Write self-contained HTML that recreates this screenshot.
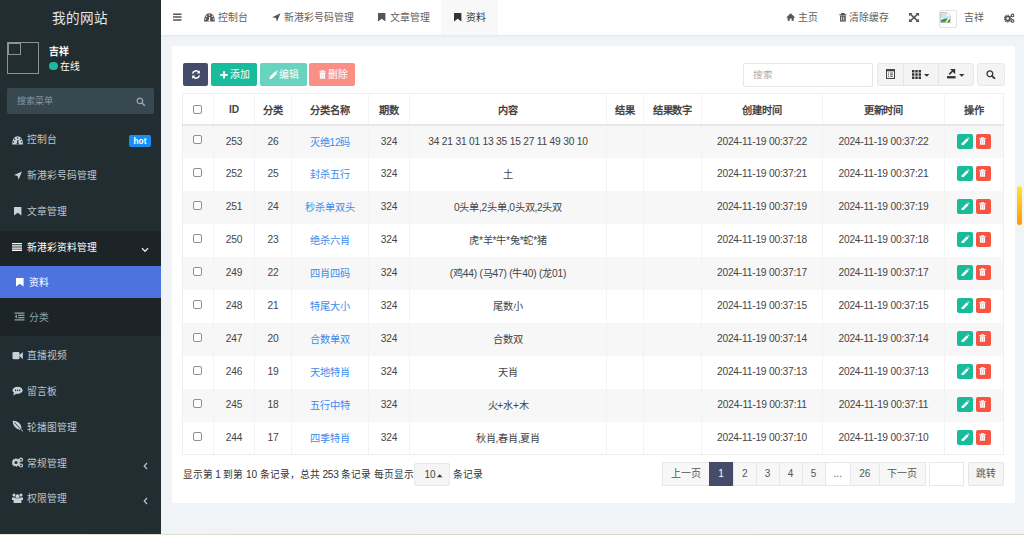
<!DOCTYPE html>
<html lang="zh-CN"><head><meta charset="utf-8">
<style>
*{box-sizing:border-box;margin:0;padding:0}
html,body{width:1024px;height:535px;overflow:hidden;background:#f1f4f6;font-family:"Liberation Sans",sans-serif;font-size:9.8px;color:#333}
.abs{position:absolute}
.n{font-size:10.2px;letter-spacing:-0.2px}
#sb{position:absolute;left:0;top:0;width:161px;height:534px;background:#222d32}
#sb .logo{position:absolute;left:0;top:0.5px;width:159px;height:35px;line-height:35px;text-align:center;color:#e4e7e9;font-size:13.6px}
.avatar{position:absolute;left:7px;top:42px;width:32px;height:32px;border:1px solid #8b9194}
.avatar i{position:absolute;left:0;top:0;width:12.5px;height:12px;border:1px solid #8b9194}
.uname{position:absolute;left:49px;top:43.5px;color:#fff;font-weight:bold;font-size:9.8px}
.ustat{position:absolute;left:49px;top:59px;color:#fff;font-size:9.8px}
.ustat b{display:inline-block;width:8.5px;height:8.5px;border-radius:50%;background:#18bc9c;vertical-align:0;margin-right:2.2px}
.sbsearch{position:absolute;left:7px;top:88px;width:147px;height:26px;background:#374850;border-radius:2px;color:#8a9ba3;padding-left:10px;line-height:26px;font-size:9px}
.mi{position:absolute;left:0;width:161px;height:35px;line-height:35px;color:#b8c7ce;padding-left:27px}
.mi .ic{position:absolute;left:12px;top:0;width:12px;height:35px}
.mi svg{position:absolute}
#hd{position:absolute;left:161px;top:0;width:863px;height:35px;background:#fff;box-shadow:0 1px 2px rgba(0,0,0,.06)}
.tab{position:absolute;top:0;height:35px;line-height:35px;color:#5f5f5f;font-size:9.9px}
#panel{position:absolute;left:172px;top:46px;width:843px;height:457px;background:#fff;border-radius:2px}
.btn{position:absolute;top:63px;height:23px;border-radius:2px;color:#fff;line-height:23px;text-align:center;font-size:9.8px}
table{position:absolute;left:182px;top:93px;width:821px;border-collapse:collapse;table-layout:fixed}
td,th{border:1px solid #f0f0f0;text-align:center;font-size:10.2px;letter-spacing:-0.2px;color:#444;white-space:nowrap;overflow:hidden;padding-bottom:1px}
th{height:31px;font-weight:bold;border-bottom:2px solid #e8e8e8;padding-bottom:0;padding-top:1px}
td{height:33px;border-top:0;border-bottom:0;border-left:1px solid #f3f3f3;border-right:1px solid #f3f3f3}
tr:last-child td{border-bottom:1px solid #eeeeee}
td:first-child,th:first-child{border-left:1px solid #efefef}
td:last-child,th:last-child{border-right:1px solid #efefef}
th{border-top:1px solid #efefef;border-left:1px solid #f3f3f3;border-right:1px solid #f3f3f3}
tr.odd td{background:#f7f7f7}
.cb{display:inline-block;width:9px;height:9px;border:1px solid #8f8f8f;border-radius:2px;background:#fff;vertical-align:middle;position:relative;top:-1px;left:-1px}
td .cb{top:-2px}
a{color:#3b8ced;text-decoration:none}
.op{display:inline-block;width:16px;height:15px;border-radius:2px;vertical-align:middle;position:relative;top:0;letter-spacing:0}
.op svg{position:absolute;left:3.8px;top:3.2px}
.op.g{background:#18bc9c;margin-right:2.5px}.op.r{background:#f75444;width:15.5px}
.pg{position:absolute;top:462px;height:24px;line-height:22px;text-align:center;border:1px solid #e8e8e8;background:#f7f7f7;color:#555;font-size:10px}
</style></head><body>
<div id="sb">
  <div class="logo">我的网站</div>
  <div class="avatar"><i></i></div>
  <div class="uname">吉祥</div>
  <div class="ustat"><b></b>在线</div>
  <div class="sbsearch">搜索菜单
    <svg class="abs" style="left:128.5px;top:8.5px" width="10" height="10" viewBox="0 0 10 10"><circle cx="3.9" cy="3.9" r="2.8" fill="none" stroke="#9aa9b0" stroke-width="1.3"/><path d="M6 6L8.3 8.3" stroke="#9aa9b0" stroke-width="1.6" stroke-linecap="round"/></svg>
  </div>
  <!-- dashboard -->
  <svg class="abs" style="left:12px;top:135.5px" width="12" height="9" viewBox="0 0 12 9"><path d="M0.2 8.4C0.2 3 2.6 0.2 5.6 0.2C8.6 0.2 11 3 11 8.4Z" fill="#c5d2d8"/><circle cx="5.6" cy="1.9" r=".75" fill="#222d32"/><circle cx="2.7" cy="3.2" r=".75" fill="#222d32"/><circle cx="8.5" cy="3.2" r=".75" fill="#222d32"/><circle cx="1.6" cy="6" r=".7" fill="#222d32"/><circle cx="9.6" cy="6" r=".7" fill="#222d32"/><path d="M5.6 8L5.9 4" stroke="#222d32" stroke-width="1.2"/><circle cx="5.6" cy="7.4" r="1" fill="#222d32"/></svg>
  <div class="mi" style="top:122px">控制台</div>
  <!-- location arrow -->
  <svg class="abs" style="left:14px;top:171px" width="8" height="9" viewBox="0 0 8 9"><path d="M8 0.5L0 4L3.6 4.9L4.5 8.8Z" fill="#c5d2d8"/></svg>
  <div class="mi" style="top:158px">新港彩号码管理</div>
  <svg class="abs" style="left:14px;top:206.5px" width="8" height="9" viewBox="0 0 8 9"><path d="M0 0H7.4V8.6L3.7 5.8L0 8.6Z" fill="#c5d2d8"/></svg>
  <div class="mi" style="top:194px">文章管理</div>
  <div class="abs" style="left:0;top:231px;width:161px;height:105px;background:#1c2427"></div>
  <svg class="abs" style="left:12.3px;top:243px" width="10" height="8" viewBox="0 0 10 8"><path d="M0 .65H10M0 2.85H10M0 5.05H10M0 7.25H10" stroke="#fff" stroke-width="1.3"/></svg>
  <div class="mi" style="top:230px;color:#fff">新港彩资料管理</div>
  <svg class="abs" style="left:141px;top:247px" width="8" height="6" viewBox="0 0 8 6"><path d="M1 1.2L4 4.2L7 1.2" fill="none" stroke="#dfe6ea" stroke-width="1.4"/></svg>
  <div class="abs" style="left:0;top:266px;width:161px;height:32px;background:#4e73df"></div>
  <svg class="abs" style="left:16px;top:278px" width="8" height="9" viewBox="0 0 8 9"><path d="M0 0H7.6V8.6L3.8 5.8L0 8.6Z" fill="#fff"/></svg>
  <div class="mi" style="top:265px;color:#fff;padding-left:29px">资料</div>
  <svg class="abs" style="left:14px;top:312px" width="11" height="9" viewBox="0 0 11 9"><path d="M.5 1.2H10.5M4 3.4H10.5M4 5.6H10.5M.5 7.8H10.5" stroke="#8aa4af" stroke-width="1.3"/><path d="M3 2.6V6.4L.6 4.5Z" fill="#8aa4af"/></svg>
  <div class="mi" style="top:300px;color:#8aa4af;padding-left:29px">分类</div>
  <svg class="abs" style="left:12px;top:351px" width="11" height="9" viewBox="0 0 11 9"><rect x=".5" y="1" width="7" height="7.2" rx="1.3" fill="#c5d2d8"/><path d="M7 4.6L10.8 1V8.2Z" fill="#c5d2d8"/></svg>
  <div class="mi" style="top:338px">直播视频</div>
  <svg class="abs" style="left:12px;top:386px" width="11" height="10" viewBox="0 0 11 10"><ellipse cx="5.6" cy="4.3" rx="5" ry="3.6" fill="#c5d2d8"/><path d="M2 6.5L1.3 9.6L4.8 7.4Z" fill="#c5d2d8"/><rect x="3" y="3.6" width="1.1" height="1.5" fill="#222d32"/><rect x="5.1" y="3.6" width="1.1" height="1.5" fill="#222d32"/><rect x="7.2" y="3.6" width="1.1" height="1.5" fill="#222d32"/></svg>
  <div class="mi" style="top:374px">留言板</div>
  <svg class="abs" style="left:12px;top:420px" width="12" height="12" viewBox="0 0 12 12"><path d="M.8 .8C5 .6 9.8 3.4 9.4 8.6C9.2 9.8 8.2 10 7.2 9.6C3 8.4 .6 5 .8 .8Z" fill="#c5d2d8"/><path d="M2.5 2.5L8 8.5L10.8 11.2" fill="none" stroke="#222d32" stroke-width=".9"/><path d="M8.6 9.2L10.8 11.2" stroke="#c5d2d8" stroke-width="1"/></svg>
  <div class="mi" style="top:410px">轮播图管理</div>
  <svg class="abs" style="left:12px;top:457px" width="12" height="11" viewBox="0 0 12 11"><circle cx="4" cy="5.5" r="2.6" fill="none" stroke="#c5d2d8" stroke-width="2"/><circle cx="4" cy="5.5" r="3.8" fill="none" stroke="#c5d2d8" stroke-width="1.1" stroke-dasharray="1.2 1.2"/><circle cx="9" cy="2.7" r="1.5" fill="none" stroke="#c5d2d8" stroke-width="1.2"/><circle cx="9" cy="8.5" r="1.5" fill="none" stroke="#c5d2d8" stroke-width="1.2"/></svg>
  <div class="mi" style="top:446px">常规管理</div>
  <svg class="abs" style="left:143px;top:462px" width="5" height="8" viewBox="0 0 5 8"><path d="M4 1L1.2 4L4 7" fill="none" stroke="#b8c7ce" stroke-width="1.2"/></svg>
  <svg class="abs" style="left:12px;top:493px" width="11" height="10" viewBox="0 0 11 10"><circle cx="2" cy="1.9" r="1.5" fill="#c5d2d8"/><circle cx="9" cy="1.9" r="1.5" fill="#c5d2d8"/><circle cx="5.5" cy="3.2" r="1.9" fill="#c5d2d8"/><path d="M0 4.5H3.4V7H0Z M7.6 4.5H11V7H7.6Z" fill="#c5d2d8"/><path d="M1.6 6.2Q1.6 5.4 3 5.3H8Q9.4 5.4 9.4 6.2V10H1.6Z" fill="#c5d2d8"/></svg>
  <div class="mi" style="top:481px">权限管理</div>
  <svg class="abs" style="left:143px;top:497px" width="5" height="8" viewBox="0 0 5 8"><path d="M4 1L1.2 4L4 7" fill="none" stroke="#b8c7ce" stroke-width="1.2"/></svg>
  <div class="abs" style="left:129px;top:135px;width:22px;height:12px;background:#1b8cf2;border-radius:2px;color:#fff;font-weight:bold;font-size:8.3px;line-height:12px;text-align:center">hot</div>
</div>
<div id="hd">
  <div class="tab" style="left:57px">控制台</div>
  <div class="tab" style="left:123px">新港彩号码管理</div>
  <div class="tab" style="left:229px">文章管理</div>
  <div class="abs" style="left:280px;top:0;width:57px;height:35px;background:#f8f8f8"></div>
  <div class="tab" style="left:305px;color:#333">资料</div>
  <div class="tab" style="left:637px">主页</div>
  <div class="tab" style="left:688px">清除缓存</div>
    <div class="tab" style="left:803px">吉祥</div>
  <svg class="abs" style="left:11px;top:13px" width="10" height="9" viewBox="0 0 10 9"><path d="M1 1.3H9.5M1 4.1H9.5M1 7.1H9.5" stroke="#555" stroke-width="1.5"/></svg>
  <svg class="abs" style="left:43px;top:13px" width="11" height="9" viewBox="0 0 11 9"><path d="M0 8.6C0 3 2.4 .2 5.4 .2C8.4 .2 10.8 3 10.8 8.6Z" fill="#555"/><circle cx="5.4" cy="1.9" r=".75" fill="#fff"/><circle cx="2.5" cy="3.2" r=".75" fill="#fff"/><circle cx="8.3" cy="3.2" r=".75" fill="#fff"/><circle cx="1.5" cy="6" r=".7" fill="#fff"/><circle cx="9.3" cy="6" r=".7" fill="#fff"/><path d="M5.4 8L5.7 4" stroke="#fff" stroke-width="1.2"/><circle cx="5.4" cy="7.4" r="1" fill="#fff"/></svg>
  <svg class="abs" style="left:110.5px;top:13px" width="9" height="9" viewBox="0 0 9 9"><path d="M8.5 .3L.2 4.2L4 5.1L4.9 8.8Z" fill="#555"/></svg>
  <svg class="abs" style="left:216.5px;top:13px" width="8" height="9" viewBox="0 0 8 9"><path d="M0 0H7.4V8.6L3.7 5.8L0 8.6Z" fill="#555"/></svg>
  <svg class="abs" style="left:293px;top:13px" width="8" height="9" viewBox="0 0 8 9"><path d="M0 0H7.4V8.6L3.7 5.8L0 8.6Z" fill="#333"/></svg>
  <svg class="abs" style="left:625px;top:13px" width="10" height="8" viewBox="0 0 10 8"><path d="M4.7 .3L.2 4.4H1.6V7.8H3.8V5.4H5.6V7.8H7.8V4.4H9.2Z" fill="#555"/></svg>
  <svg class="abs" style="left:677.5px;top:13px" width="8" height="9" viewBox="0 0 8 9"><path d="M.3 1.8H7.5M2.6 1.8V.6H5.2V1.8" fill="none" stroke="#555" stroke-width="1.1"/><path d="M1 2.5H6.8V8.6H1Z" fill="#555"/><path d="M2.6 3.6V7.5M4.8 3.6V7.5" stroke="#fff" stroke-width=".8"/></svg>
  <svg class="abs" style="left:748px;top:12.5px" width="10" height="9" viewBox="0 0 10 9"><path d="M1.6 1.4L8.4 7.6M8.4 1.4L1.6 7.6" stroke="#555" stroke-width="1.5"/><path d="M0 0H3.6L0 3.3Z M10 0H6.4L10 3.3Z M0 9H3.6L0 5.7Z M10 9H6.4L10 5.7Z" fill="#555"/></svg>
  <div class="abs" style="left:777.5px;top:10px;width:18.5px;height:17.5px;border:1px solid #e3e3e3;border-radius:2px;background:#fff"></div>
  <svg class="abs" style="left:779px;top:11.5px" width="11" height="11" viewBox="0 0 11 11"><path d="M.5 .5H7L10.3 3.8V10.5H.5Z" fill="#fff" stroke="#bbb" stroke-width=".8"/><path d="M1 1H6.8V4H10V6.5L1 6Z" fill="#cfe3f5"/><path d="M1 10.2V8C3 6.5 5.5 6 8 6.8L5 10.2Z" fill="#3aa03a"/><path d="M6.5 10.2L10 6.8V10.2Z" fill="#3aa03a"/></svg>
  <svg class="abs" style="left:843px;top:12.5px" width="11" height="10" viewBox="0 0 11 10"><g fill="none" stroke="#555"><circle cx="3.7" cy="5.6" r="2.2" stroke-width="1.9"/><circle cx="3.7" cy="5.6" r="3.5" stroke-width="1.2" stroke-dasharray="1.1 1.2"/><circle cx="8.6" cy="2.4" r="1.3" stroke-width="1.1"/><circle cx="8.6" cy="7.9" r="1.3" stroke-width="1.1"/></g></svg>

</div>
<div class="abs" style="left:0;top:534px;width:1024px;height:1px;background:linear-gradient(90deg,#e3e6cb 0%,#dcdccb 20%,#d5d5c9 45%,#d6cfc8 100%)"></div>
<div id="panel"></div>
<div class="btn" style="left:183px;width:25px;background:#444c69"><svg class="abs" style="left:7.5px;top:7px" width="10" height="9" viewBox="0 0 10 9"><path d="M1.6 3.6A3.5 3.5 0 0 1 7.8 2.2" fill="none" stroke="#fff" stroke-width="1.5"/><path d="M8.9 .3V3.5H5.7Z" fill="#fff"/><path d="M8.4 5.4A3.5 3.5 0 0 1 2.2 6.8" fill="none" stroke="#fff" stroke-width="1.5"/><path d="M1.1 8.7V5.5H4.3Z" fill="#fff"/></svg></div>
<div class="btn" style="left:211px;width:46px;background:#18bc9c"><svg class="abs" style="left:9px;top:8px" width="8" height="8" viewBox="0 0 8 8"><path d="M4 .3V7.5M.3 3.9H7.6" stroke="#fff" stroke-width="2"/></svg><span class="abs" style="left:19px;top:0">添加</span></div>
<div class="btn" style="left:260px;width:47px;background:#18bc9c;opacity:.65"><svg class="abs" style="left:8.5px;top:7px" width="9" height="10" viewBox="0 0 9 10"><path d="M.3 9.3L.8 6.8L6.3 1.3L8.3 3.3L2.8 8.8Z" fill="#fff"/><path d="M6.9 .7L7.5 .2L9 1.7L8.5 2.3Z" fill="#fff"/></svg><span class="abs" style="left:18.5px;top:0">编辑</span></div>
<div class="btn" style="left:309px;width:46px;background:#f75444;opacity:.65"><svg class="abs" style="left:9.5px;top:7px" width="7" height="9" viewBox="0 0 7 9"><path d="M.2 1.9H6.8M2.2 1.8V.7H4.8V1.8" fill="none" stroke="#fff" stroke-width="1"/><path d="M.8 2.6H6.2V8.7H.8Z" fill="#fff"/><path d="M2.5 3.6V7.6M4.5 3.6V7.6" stroke="#f9a49b" stroke-width=".7"/></svg><span class="abs" style="left:19px;top:0">删除</span></div>

<div class="abs" style="left:743px;top:63px;width:130px;height:23.5px;border:1px solid #e6e6e6;border-radius:2px;color:#aaa;line-height:21px;padding-left:9px;font-size:9.5px">搜索</div>
<div class="abs" style="left:877px;top:63px;width:97px;height:22.5px;border:1px solid #e8e8e8;border-radius:3px;background:#f4f4f4"></div>
<div class="abs" style="left:903px;top:63px;width:1px;height:22.5px;background:#e6e6e6"></div>
<div class="abs" style="left:938px;top:63px;width:1px;height:22.5px;background:#e6e6e6"></div>
<svg class="abs" style="left:886px;top:69px" width="9" height="10" viewBox="0 0 9 10"><rect x=".5" y=".5" width="8" height="9" fill="none" stroke="#444" stroke-width="1"/><rect x=".5" y=".5" width="8" height="1.8" fill="#444"/><path d="M2 4H3M2 5.7H3M2 7.4H3M4 4H7M4 5.7H7M4 7.4H7" stroke="#555" stroke-width=".9"/></svg>
<svg class="abs" style="left:912px;top:70px" width="9" height="9" viewBox="0 0 9 9"><path d="M0 0H2.4V2.4H0ZM3.3 0H5.7V2.4H3.3ZM6.6 0H9V2.4H6.6ZM0 3.3H2.4V5.7H0ZM3.3 3.3H5.7V5.7H3.3ZM6.6 3.3H9V5.7H6.6ZM0 6.6H2.4V9H0ZM3.3 6.6H5.7V9H3.3ZM6.6 6.6H9V9H6.6Z" fill="#333"/></svg>
<svg class="abs" style="left:924px;top:73.5px" width="6" height="3" viewBox="0 0 6 3"><path d="M0 0H5.4L2.7 2.8Z" fill="#333"/></svg>
<svg class="abs" style="left:947px;top:69px" width="10" height="10" viewBox="0 0 10 10"><path d="M0 7.1H8.6V9.4H0Z" fill="#333"/><path d="M3 0H8.2V5.2Z" fill="#333"/><path d="M2.2 5.4L5.6 2" stroke="#333" stroke-width="1.7"/></svg>
<svg class="abs" style="left:959px;top:73.5px" width="6" height="3" viewBox="0 0 6 3"><path d="M0 0H5.4L2.7 2.8Z" fill="#333"/></svg>
<div class="abs" style="left:977px;top:63px;width:28px;height:22.5px;border:1px solid #e8e8e8;border-radius:3px;background:#f4f4f4"></div>
<svg class="abs" style="left:986px;top:70px" width="10" height="9" viewBox="0 0 10 9"><circle cx="3.9" cy="3.8" r="2.9" fill="none" stroke="#333" stroke-width="1.3"/><path d="M6 5.9L8.5 8.4" stroke="#333" stroke-width="1.7" stroke-linecap="round"/></svg>

<table>
<colgroup><col style="width:31px"><col style="width:41px"><col style="width:37px"><col style="width:77px"><col style="width:41px"><col style="width:197px"><col style="width:37px"><col style="width:58px"><col style="width:121px"><col style="width:122px"><col style="width:59px"></colgroup>
<thead><tr><th><span class="cb"></span></th><th>ID</th><th>分类</th><th>分类名称</th><th>期数</th><th>内容</th><th>结果</th><th>结果数字</th><th>创建时间</th><th>更新时间</th><th>操作</th></tr></thead>
<tbody>
<tr class="odd"><td><span class="cb"></span></td><td>253</td><td>26</td><td><a>灭绝12码</a></td><td>324</td><td>34 21 31 01 13 35 15 27 11 49 30 10</td><td></td><td></td><td>2024-11-19 00:37:22</td><td>2024-11-19 00:37:22</td><td><span class="op g"><svg width="9" height="9" viewBox="0 0 9 9"><path d="M.4 8.1L.8 6.2L5.8 1.2L7.6 3L2.6 8Z" fill="#fff"/><path d="M6.4 .6L6.9 .1L8.6 1.8L8.1 2.3Z" fill="#fff"/></svg></span><span class="op r"><svg width="7" height="8" viewBox="0 0 7 8"><path d="M.2 1.6H6.8M2.3 1.5V.6H4.7V1.5" fill="none" stroke="#fff" stroke-width=".9"/><path d="M.9 2.3H6.1V7.7H.9Z" fill="#fff"/><path d="M2.5 3.3V6.7M4.5 3.3V6.7" stroke="#f9a49b" stroke-width=".7"/></svg></span></td></tr>
<tr><td><span class="cb"></span></td><td>252</td><td>25</td><td><a>封杀五行</a></td><td>324</td><td>土</td><td></td><td></td><td>2024-11-19 00:37:21</td><td>2024-11-19 00:37:21</td><td><span class="op g"><svg width="9" height="9" viewBox="0 0 9 9"><path d="M.4 8.1L.8 6.2L5.8 1.2L7.6 3L2.6 8Z" fill="#fff"/><path d="M6.4 .6L6.9 .1L8.6 1.8L8.1 2.3Z" fill="#fff"/></svg></span><span class="op r"><svg width="7" height="8" viewBox="0 0 7 8"><path d="M.2 1.6H6.8M2.3 1.5V.6H4.7V1.5" fill="none" stroke="#fff" stroke-width=".9"/><path d="M.9 2.3H6.1V7.7H.9Z" fill="#fff"/><path d="M2.5 3.3V6.7M4.5 3.3V6.7" stroke="#f9a49b" stroke-width=".7"/></svg></span></td></tr>
<tr class="odd"><td><span class="cb"></span></td><td>251</td><td>24</td><td><a>秒杀单双头</a></td><td>324</td><td>0头单,2头单,0头双,2头双</td><td></td><td></td><td>2024-11-19 00:37:19</td><td>2024-11-19 00:37:19</td><td><span class="op g"><svg width="9" height="9" viewBox="0 0 9 9"><path d="M.4 8.1L.8 6.2L5.8 1.2L7.6 3L2.6 8Z" fill="#fff"/><path d="M6.4 .6L6.9 .1L8.6 1.8L8.1 2.3Z" fill="#fff"/></svg></span><span class="op r"><svg width="7" height="8" viewBox="0 0 7 8"><path d="M.2 1.6H6.8M2.3 1.5V.6H4.7V1.5" fill="none" stroke="#fff" stroke-width=".9"/><path d="M.9 2.3H6.1V7.7H.9Z" fill="#fff"/><path d="M2.5 3.3V6.7M4.5 3.3V6.7" stroke="#f9a49b" stroke-width=".7"/></svg></span></td></tr>
<tr><td><span class="cb"></span></td><td>250</td><td>23</td><td><a>绝杀六肖</a></td><td>324</td><td>虎*羊*牛*兔*蛇*猪</td><td></td><td></td><td>2024-11-19 00:37:18</td><td>2024-11-19 00:37:18</td><td><span class="op g"><svg width="9" height="9" viewBox="0 0 9 9"><path d="M.4 8.1L.8 6.2L5.8 1.2L7.6 3L2.6 8Z" fill="#fff"/><path d="M6.4 .6L6.9 .1L8.6 1.8L8.1 2.3Z" fill="#fff"/></svg></span><span class="op r"><svg width="7" height="8" viewBox="0 0 7 8"><path d="M.2 1.6H6.8M2.3 1.5V.6H4.7V1.5" fill="none" stroke="#fff" stroke-width=".9"/><path d="M.9 2.3H6.1V7.7H.9Z" fill="#fff"/><path d="M2.5 3.3V6.7M4.5 3.3V6.7" stroke="#f9a49b" stroke-width=".7"/></svg></span></td></tr>
<tr class="odd"><td><span class="cb"></span></td><td>249</td><td>22</td><td><a>四肖四码</a></td><td>324</td><td>(鸡44) (马47) (牛40) (龙01)</td><td></td><td></td><td>2024-11-19 00:37:17</td><td>2024-11-19 00:37:17</td><td><span class="op g"><svg width="9" height="9" viewBox="0 0 9 9"><path d="M.4 8.1L.8 6.2L5.8 1.2L7.6 3L2.6 8Z" fill="#fff"/><path d="M6.4 .6L6.9 .1L8.6 1.8L8.1 2.3Z" fill="#fff"/></svg></span><span class="op r"><svg width="7" height="8" viewBox="0 0 7 8"><path d="M.2 1.6H6.8M2.3 1.5V.6H4.7V1.5" fill="none" stroke="#fff" stroke-width=".9"/><path d="M.9 2.3H6.1V7.7H.9Z" fill="#fff"/><path d="M2.5 3.3V6.7M4.5 3.3V6.7" stroke="#f9a49b" stroke-width=".7"/></svg></span></td></tr>
<tr><td><span class="cb"></span></td><td>248</td><td>21</td><td><a>特尾大小</a></td><td>324</td><td>尾数小</td><td></td><td></td><td>2024-11-19 00:37:15</td><td>2024-11-19 00:37:15</td><td><span class="op g"><svg width="9" height="9" viewBox="0 0 9 9"><path d="M.4 8.1L.8 6.2L5.8 1.2L7.6 3L2.6 8Z" fill="#fff"/><path d="M6.4 .6L6.9 .1L8.6 1.8L8.1 2.3Z" fill="#fff"/></svg></span><span class="op r"><svg width="7" height="8" viewBox="0 0 7 8"><path d="M.2 1.6H6.8M2.3 1.5V.6H4.7V1.5" fill="none" stroke="#fff" stroke-width=".9"/><path d="M.9 2.3H6.1V7.7H.9Z" fill="#fff"/><path d="M2.5 3.3V6.7M4.5 3.3V6.7" stroke="#f9a49b" stroke-width=".7"/></svg></span></td></tr>
<tr class="odd"><td><span class="cb"></span></td><td>247</td><td>20</td><td><a>合数单双</a></td><td>324</td><td>合数双</td><td></td><td></td><td>2024-11-19 00:37:14</td><td>2024-11-19 00:37:14</td><td><span class="op g"><svg width="9" height="9" viewBox="0 0 9 9"><path d="M.4 8.1L.8 6.2L5.8 1.2L7.6 3L2.6 8Z" fill="#fff"/><path d="M6.4 .6L6.9 .1L8.6 1.8L8.1 2.3Z" fill="#fff"/></svg></span><span class="op r"><svg width="7" height="8" viewBox="0 0 7 8"><path d="M.2 1.6H6.8M2.3 1.5V.6H4.7V1.5" fill="none" stroke="#fff" stroke-width=".9"/><path d="M.9 2.3H6.1V7.7H.9Z" fill="#fff"/><path d="M2.5 3.3V6.7M4.5 3.3V6.7" stroke="#f9a49b" stroke-width=".7"/></svg></span></td></tr>
<tr><td><span class="cb"></span></td><td>246</td><td>19</td><td><a>天地特肖</a></td><td>324</td><td>天肖</td><td></td><td></td><td>2024-11-19 00:37:13</td><td>2024-11-19 00:37:13</td><td><span class="op g"><svg width="9" height="9" viewBox="0 0 9 9"><path d="M.4 8.1L.8 6.2L5.8 1.2L7.6 3L2.6 8Z" fill="#fff"/><path d="M6.4 .6L6.9 .1L8.6 1.8L8.1 2.3Z" fill="#fff"/></svg></span><span class="op r"><svg width="7" height="8" viewBox="0 0 7 8"><path d="M.2 1.6H6.8M2.3 1.5V.6H4.7V1.5" fill="none" stroke="#fff" stroke-width=".9"/><path d="M.9 2.3H6.1V7.7H.9Z" fill="#fff"/><path d="M2.5 3.3V6.7M4.5 3.3V6.7" stroke="#f9a49b" stroke-width=".7"/></svg></span></td></tr>
<tr class="odd"><td><span class="cb"></span></td><td>245</td><td>18</td><td><a>五行中特</a></td><td>324</td><td>火+水+木</td><td></td><td></td><td>2024-11-19 00:37:11</td><td>2024-11-19 00:37:11</td><td><span class="op g"><svg width="9" height="9" viewBox="0 0 9 9"><path d="M.4 8.1L.8 6.2L5.8 1.2L7.6 3L2.6 8Z" fill="#fff"/><path d="M6.4 .6L6.9 .1L8.6 1.8L8.1 2.3Z" fill="#fff"/></svg></span><span class="op r"><svg width="7" height="8" viewBox="0 0 7 8"><path d="M.2 1.6H6.8M2.3 1.5V.6H4.7V1.5" fill="none" stroke="#fff" stroke-width=".9"/><path d="M.9 2.3H6.1V7.7H.9Z" fill="#fff"/><path d="M2.5 3.3V6.7M4.5 3.3V6.7" stroke="#f9a49b" stroke-width=".7"/></svg></span></td></tr>
<tr><td><span class="cb"></span></td><td>244</td><td>17</td><td><a>四季特肖</a></td><td>324</td><td>秋肖,春肖,夏肖</td><td></td><td></td><td>2024-11-19 00:37:10</td><td>2024-11-19 00:37:10</td><td><span class="op g"><svg width="9" height="9" viewBox="0 0 9 9"><path d="M.4 8.1L.8 6.2L5.8 1.2L7.6 3L2.6 8Z" fill="#fff"/><path d="M6.4 .6L6.9 .1L8.6 1.8L8.1 2.3Z" fill="#fff"/></svg></span><span class="op r"><svg width="7" height="8" viewBox="0 0 7 8"><path d="M.2 1.6H6.8M2.3 1.5V.6H4.7V1.5" fill="none" stroke="#fff" stroke-width=".9"/><path d="M.9 2.3H6.1V7.7H.9Z" fill="#fff"/><path d="M2.5 3.3V6.7M4.5 3.3V6.7" stroke="#f9a49b" stroke-width=".7"/></svg></span></td></tr>
</tbody></table>

<div class="abs" style="left:182.5px;top:466.5px;color:#333;font-size:9.7px">显示第 <span class="n">1</span> 到第 <span class="n">10</span> 条记录，总共 <span class="n">253</span> 条记录 每页显示</div>
<div class="abs" style="left:414px;top:463px;width:36px;height:23px;border:1px solid #e8e8e8;background:#f5f5f5;border-radius:2px;line-height:21px;padding-left:9.5px;color:#444;font-size:10px">10</div><svg class="abs" style="left:436.5px;top:473.5px" width="6" height="4" viewBox="0 0 6 4"><path d="M0 3.2H5.4L2.7 .3Z" fill="#333"/></svg>
<div class="abs" style="left:453px;top:466.5px;color:#333">条记录</div>

<div class="pg" style="left:662px;width:48px;">上一页</div>
<div class="pg" style="left:709px;width:24px;background:#444c69;border-color:#444c69;color:#fff;z-index:2;">1</div>
<div class="pg" style="left:733px;width:23.5px;">2</div>
<div class="pg" style="left:755.5px;width:24.0px;">3</div>
<div class="pg" style="left:778.5px;width:24.0px;">4</div>
<div class="pg" style="left:801.5px;width:24.0px;">5</div>
<div class="pg" style="left:824.5px;width:26.5px;background:#fff;">...</div>
<div class="pg" style="left:850px;width:29.5px;">26</div>
<div class="pg" style="left:878.5px;width:47.5px;">下一页</div>
<div class="abs" style="left:929px;top:462px;width:35px;height:24px;border:1px solid #e8e8e8;background:#fff"></div>
<div class="abs" style="left:968px;top:462px;width:36px;height:24px;border:1px solid #e4e4e4;background:#f5f5f5;border-radius:2px;text-align:center;line-height:22px;color:#555">跳转</div>

<div class="abs" style="left:1017px;top:186px;width:5px;height:39px;border-radius:3px;background:linear-gradient(#ffe433,#ff9a00)"></div>
</body></html>
